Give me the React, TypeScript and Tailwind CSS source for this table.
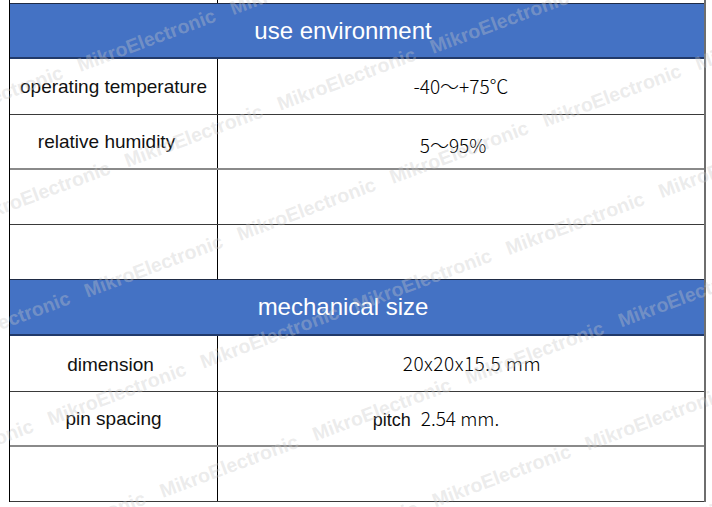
import React from 'react'

const sans = "font-['Liberation_Sans',Arial,sans-serif]"
const cjk = "font-['Noto_Sans_CJK_SC','Noto_Sans',sans-serif] font-light"

// watermark rows: v = distance across the slant, p = where the first word starts
const marks = [
  { v: 96, p: 50 },
  { v: 202, p: 61 },
  { v: 310, p: 141 },
  { v: 417, p: 62 },
  { v: 524, p: 142 },
  { v: 628, p: 68 },
  { v: 735, p: 145 },
]

const Header = ({ title, h }: { title: string; h: string }) => (
  <div className={`${h} border-t border-t-[#1f2b45] border-b-2 border-b-[#213a6b] bg-[#4472c4] flex items-center justify-center pr-[28px]`}>
    <span className={`${sans} text-[24px] text-white leading-none`}>{title}</span>
  </div>
)

type RowProps = {
  h: string
  line?: string
  left?: React.ReactNode
  right?: React.ReactNode
  lpad?: string
  rpad?: string
}

const Row = ({ h, line = 'border-b border-b-[#3a3a3a]', left, right, lpad = '', rpad = '' }: RowProps) => (
  <div className={`${h} ${line} flex`}>
    <div className={`w-[208px] shrink-0 border-r border-r-black flex items-center justify-center ${lpad}`}>
      <span className={`${sans} text-[19px] text-[#111] leading-none`}>{left}</span>
    </div>
    <div className={`flex-1 flex items-center justify-center ${rpad}`}>{right}</div>
  </div>
)

export default function App() {
  return (
    <div className="relative w-[712px] h-[507px] overflow-hidden bg-white">
      <div className="ml-[9px] w-[697px] border-l border-l-black border-r-2 border-r-[#6e6e6e]">
        <div className="h-[3px] flex">
          <div className="w-[208px] border-r border-r-black" />
        </div>
        <Header title="use environment" h="h-[56px]" />
        <Row
          h="h-[56px]"
          left="operating temperature"
          right={<span className={`${cjk} text-[19px] text-black`}>-40～+75℃</span>}
        />
        <Row
          h="h-[55px]"
          line="border-b-2 border-b-[#8a8a8a]"
          lpad="pr-[14px]"
          rpad="pr-[16px] pt-[8px]"
          left="relative humidity"
          right={<span className={`${cjk} text-[19px] text-black`}>5～95%</span>}
        />
        <Row h="h-[55px]" />
        <Row h="h-[54px]" line="" />
        <Header title="mechanical size" h="h-[57px]" />
        <Row
          h="h-[56px]"
          lpad="pr-[6px] pt-[2px]"
          rpad="pl-[22px]"
          left="dimension"
          right={<span className={`${cjk} text-[19px] text-black tracking-[0.5px]`}>20x20x15.5 mm</span>}
        />
        <Row
          h="h-[55px]"
          line="border-b-2 border-b-[#8a8a8a]"
          rpad="pr-[50px]"
          left="pin spacing"
          right={
            <span className="flex items-baseline">
              <span className={`${sans} text-[18px] text-[#111]`}>pitch</span>
              <span className={`${cjk} text-[19px] text-black ml-[10px]`}>2.54 mm.</span>
            </span>
          }
        />
        <Row h="h-[55px]" />
      </div>

      <div className="absolute inset-0 pointer-events-none overflow-hidden">
        {marks.map((m, i) => (
          <div
            key={i}
            className="absolute left-0 top-0 origin-top-left flex whitespace-nowrap"
            style={{ transform: `rotate(-20.4deg) translate(${m.p - 326}px, ${m.v - 16.5}px)` }}
          >
            {Array.from({ length: 7 }).map((_, j) => (
              <span
                key={j}
                className={`${sans} inline-block w-[163px] shrink-0 text-[19.5px] font-bold leading-none text-[rgba(200,200,200,0.36)]`}
              >
                MikroElectronic
              </span>
            ))}
          </div>
        ))}
      </div>
    </div>
  )
}
